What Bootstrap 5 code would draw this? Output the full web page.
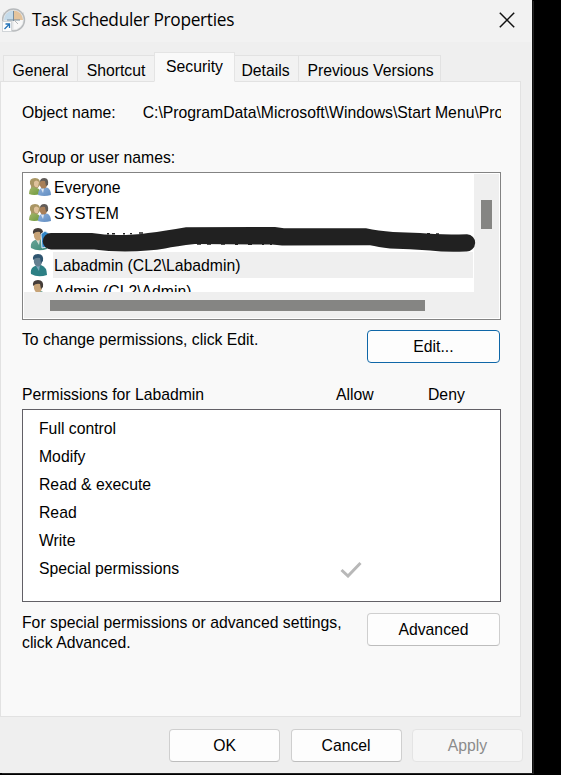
<!DOCTYPE html>
<html lang="en">
<head>
<meta charset="utf-8">
<meta name="viewport" content="width=device-width, initial-scale=1">
<title>Task Scheduler Properties</title>
<link rel="stylesheet" href="https://cdn.jsdelivr.net/npm/bootstrap@5.3.0/dist/css/bootstrap.min.css">
<style>
body{background:#000;color:#000;font:15.76px/20px "Liberation Sans",Arial,sans-serif;width:561px;height:775px}
.dialog{width:532px;height:773px;background:#efefef;border-right:1px solid #f4f4f4;box-shadow:1px 0 0 #111,2px 1px 0 #222}
.titlebar{height:42px;background:#f2f2f2;padding:0 16px 2px 2px}
.titlebar h1{font:17.3px/24px "Open Sans","Noto Sans",sans-serif;letter-spacing:-.29px;margin:0 0 0 6px;flex:1;white-space:nowrap}
.tabs{height:40px;padding-left:3px;margin-bottom:-1px}
.tabs .nav-link{height:27px;padding:5px 0 0;border:1px solid #e2e2e2;border-radius:0;background:#f2f2f2;color:#000;line-height:20px;text-align:center;margin:0 -1px 0 0;white-space:nowrap}
.tabs .nav-link.active{height:30px;padding-top:4px;background:#f9f9f9;color:#000;z-index:1;border-color:#e4e4e4;border-bottom-color:#f9f9f9}
.tabs .t1{width:75px}.tabs .t2{width:78px}.tabs .t3{width:81px}.tabs .t4{width:65px;padding-right:2px}.tabs .t5{width:143px;padding-left:2px}
.sheet{width:521px;height:636px;background:#f9f9f9;border:1px solid #e2e2e2;padding:21px 19px 0 21px}
.path{margin-left:27px;flex:1;overflow:hidden;white-space:nowrap}
.g-label{margin:25px 0 4px}
.users{height:148px;border:1px solid #838383;background:#fff;padding:1px}
.names{width:450px;height:118px;overflow:hidden}
.name-row{height:26px;line-height:28px;padding-left:5px}
.name-row svg{width:24px;height:24px;flex:none}
.name-row span{flex:1;height:26px;padding-left:1px;margin-right:1px;white-space:nowrap}
.name-row.picked span{background:#efefef}
.vbar{width:25px;background:#efefef;padding:26px 0 0 7px}
.vbar div{width:11px;height:29px;background:#858583}
.hbar{height:26px;background:#efefef;padding:8px 0 0 26px}
.hbar div{width:375px;height:11px;background:#858583}
.stroke-over{position:absolute;left:20px;top:52px;width:440px;height:30px;overflow:visible}
.dbtn{height:33px;padding:0;border:1px solid #cfcfcf;border-bottom-color:#bdbdbd;border-radius:4px;background:#fdfdfd;color:#000;font-size:15.76px;line-height:20px}
.w-lg{width:133px;margin-right:1px}.w-md{width:111px}
.dbtn.focus-edge{border-color:#0f67a8}
.dbtn:disabled{background:#f6f6f6;border-color:#e4e4e4;color:#8b8b8b;opacity:1}
.note{height:65px;padding-top:10px}
.note.last{padding-top:11px}
.perm-head{height:24px}
.perm-head .name-col{width:314px}.perm-head .allow-col{width:92px}
.perms{height:193px;border:1px solid #626066;background:#fff;padding:5px 16px}
.perm-row{height:28px;line-height:28px}
.perm-row span{width:301px}
.footer-bar{height:56px;padding:12px 8px 0 0;gap:10.4px}
</style>
</head>
<body class="overflow-hidden">
<svg class="position-absolute" width="0" height="0">
<defs>
<linearGradient id="green" x1="0" y1="0" x2="1" y2="1"><stop offset="0" stop-color="#a7b56c"/><stop offset="1" stop-color="#6b9a3c"/></linearGradient>
<linearGradient id="blue" x1="0" y1="0" x2="1" y2="1"><stop offset="0" stop-color="#8fb0dc"/><stop offset="1" stop-color="#5f8cc0"/></linearGradient>
<linearGradient id="teal" x1="0" y1="0" x2="1" y2="1"><stop offset="0" stop-color="#6aa598"/><stop offset="1" stop-color="#3c8a78"/></linearGradient>
<symbol id="pair" viewBox="0 0 24 24">
<path d="M1 9Q0 3 6 3Q12 3 11 10L8 14H2Q3 11 1 9Z" fill="#a99664"/>
<path d="M5 7Q7 4 10 7L9 12Q6 13 5 10Z" fill="#dfc29c"/>
<path d="M0 19Q0 13 4 12L9 13.500Q11 14 11 19Q5 21 0 19Z" fill="url(#green)"/>
<path d="M9 20Q9 14 13 13L18 12.500Q22 14 22 20Q15 22 9 20Z" fill="url(#blue)"/>
<ellipse cx="14.5" cy="8.8" rx="3.8" ry="5" fill="#a87f59"/>
<path d="M11 7Q11 3 15.500 3Q20 3 19 10L17 11L16 6Q13 5 11 7Z" fill="#615c58"/>
<path d="M12 14L15 13.500L14 18Z" fill="#dce5f1"/>
</symbol>
<symbol id="person" viewBox="0 0 24 24">
<path d="M2 21Q1 15 6 13L12 12Q18 14 18 22Q9 25 2 21Z" fill="url(#teal)"/>
<path d="M7 13L11 12L10 18Z" fill="#d5ddd1"/>
<ellipse cx="9" cy="8" rx="4.200" ry="5.500" fill="#c7a377"/>
<path d="M4 7Q3 1 9 1Q15 1 14 8L12 10L11 5Q7 4 4 7Z" fill="#453d39"/>
</symbol>
<symbol id="person-picked" viewBox="0 0 24 24">
<path d="M2 21Q1 15 6 13L12 12Q18 14 18 22Q9 25 2 21Z" fill="#2c7f84"/>
<path d="M7 13L11 12L10 18Z" fill="#7fa7bb"/>
<ellipse cx="9" cy="8" rx="4.200" ry="5.500" fill="#647f90"/>
<path d="M4 7Q3 1 9 1Q15 1 14 8L12 10L11 5Q7 4 4 7Z" fill="#2f5570"/>
</symbol>
</defs>
</svg>
<main class="dialog">
<header class="titlebar d-flex align-items-center">
<svg width="24" height="24" viewBox="0 0 24 24">
<circle cx="11.500" cy="12" r="11" fill="#e3e5e6" stroke="#b7babc" stroke-width="1.400"/>
<path d="M11.500 12V2.500A9.500 9.500 0 0 0 2 12Z" fill="#c5dbea"/>
<path d="M11.500 12V2.500A9.500 9.500 0 0 1 21 12Z" fill="#e4c49d"/>
<path d="M11.500 12H21A9.500 9.500 0 0 1 11.500 21.500Z" fill="#f8f8f8"/>
<path d="M11.500 3V13M5 12H18" stroke="#778d9e" stroke-width="1"/>
<path d="M12 12l4 4M20 6l1.500-1M3 6L1.500 5" stroke="#b5b7b8"/>
<rect x=".5" y="13.500" width="9" height="10" fill="#fdfdfd" stroke="#d1d5d8"/>
<path d="M2.500 21L7.500 16M3.500 16H7.500V20" fill="none" stroke="#2674b8" stroke-width="1.300"/>
</svg>
<h1>Task Scheduler Properties</h1>
<svg width="16" height="16" viewBox="0 0 16 16"><path d="M.8.8L15.200 15.200M15.200.8L.8 15.200" stroke="#111" stroke-width="1.500"/></svg>
</header>
<nav class="tabs nav flex-nowrap align-items-end position-relative">
<a class="nav-link t1">General</a><a class="nav-link t2">Shortcut</a><a class="nav-link active t3 position-relative">Security</a><a class="nav-link t4">Details</a><a class="nav-link t5">Previous Versions</a>
</nav>
<section class="sheet">
<div class="d-flex"><span class="text-nowrap">Object name:</span><span class="path">C:\ProgramData\Microsoft\Windows\Start Menu\Programs</span></div>
<div class="g-label">Group or user names:</div>
<div class="users position-relative">
<div class="d-flex">
<div class="names">
<div class="name-row d-flex align-items-center"><svg><use href="#pair"/></svg><span>Everyone</span></div>
<div class="name-row d-flex align-items-center"><svg><use href="#pair"/></svg><span>SYSTEM</span></div>
<div class="name-row d-flex align-items-center"><svg><use href="#person"/><path d="M12 7L16 4L22 8V19L13 21Z" fill="#3186c7" stroke="#d8e8f3"/></svg><span></span></div>
<div class="name-row d-flex align-items-center picked"><svg><use href="#person-picked"/></svg><span>Labadmin (CL2\Labadmin)</span></div>
<div class="name-row d-flex align-items-center"><svg><use href="#person"/></svg><span>Admin (CL2\Admin)</span></div>
</div>
<div class="vbar"><div></div></div>
</div>
<div class="hbar"><div></div></div>
<svg class="stroke-over" viewBox="43 225 440 30">
<path d="M107 233.800h2M112 233.800h3M123 233.800h2M130 233.600h2M139 233h4M197 244h4M207 244h4M221 244h4M235 244.200h3M248 244.200h4M262 244.200h2M270 244.200h2M427 233.600h3M436 234h3" stroke="#222" stroke-width="1.400"/>
<path d="M51 233L92 233Q104 235 117 235Q135 235 148 233Q165 231 186 227.200L275 227L284 228.300L366 228.300Q378 231 393 232L420 233Q438 235 467 234.200A8.500 8.500 0 0 1 466 251.500Q446 252.500 430 250.500Q410 249 390 248.500Q378 247 370 245.300L282 245.500L272 244.500L195 244Q176 246 165 248.500Q150 251 125 251.500Q108 251.500 94 249.600L51 249.500A8.200 8.200 0 0 1 51 233Z" fill="#212121"/>
</svg>
</div>
<div class="note d-flex justify-content-between align-items-start"><span class="text-nowrap">To change permissions, click Edit.</span><button class="btn dbtn w-lg focus-edge">Edit...</button></div>
<div class="perm-head d-flex"><span class="name-col">Permissions for Labadmin</span><span class="allow-col">Allow</span><span>Deny</span></div>
<div class="perms">
<div class="perm-row">Full control</div>
<div class="perm-row">Modify</div>
<div class="perm-row">Read &amp; execute</div>
<div class="perm-row">Read</div>
<div class="perm-row">Write</div>
<div class="perm-row d-flex align-items-center"><span>Special permissions</span><svg width="22" height="18" viewBox="0 0 22 18"><path d="M1.500 10L8 16L20.500 3" fill="none" stroke="#b8b8b8" stroke-width="3"/></svg></div>
</div>
<div class="note last d-flex justify-content-between align-items-start"><span class="text-nowrap">For special permissions or advanced settings,<br>click Advanced.</span><button class="btn dbtn w-lg">Advanced</button></div>
</section>
<footer class="footer-bar d-flex justify-content-end">
<button class="btn dbtn w-md">OK</button><button class="btn dbtn w-md">Cancel</button><button class="btn dbtn w-md" disabled>Apply</button>
</footer>
</main>
<script src="https://cdn.jsdelivr.net/npm/bootstrap@5.3.0/dist/js/bootstrap.bundle.min.js"></script>
</body>
</html>
